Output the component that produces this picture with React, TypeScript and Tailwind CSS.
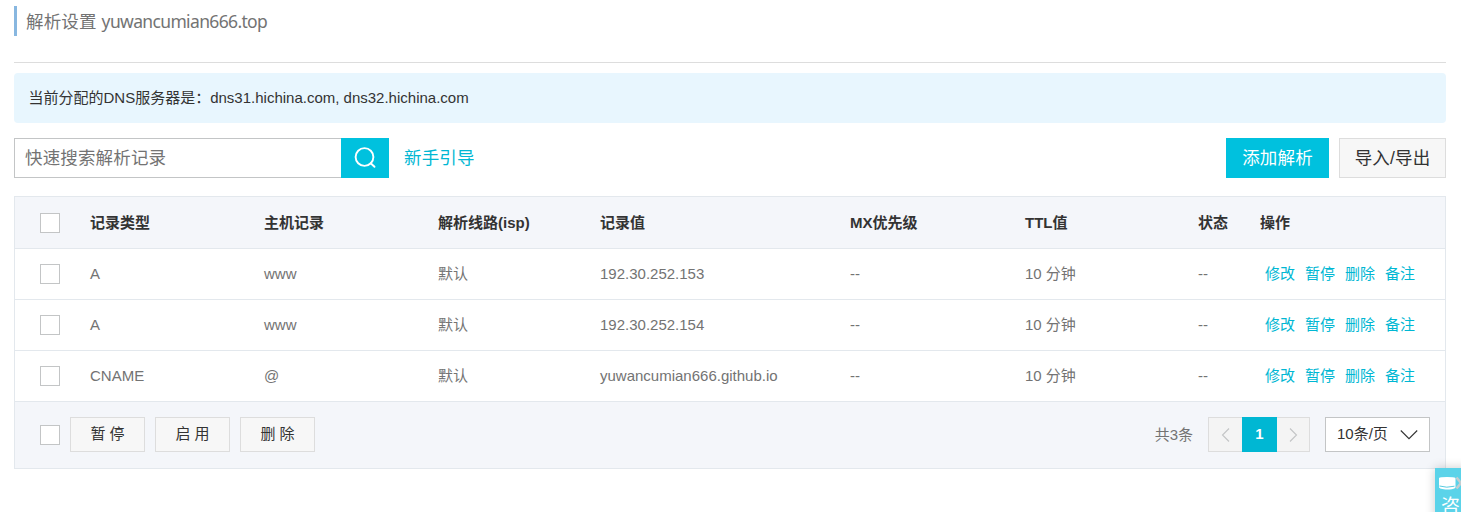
import React from "react";

const columns = "grid grid-cols-[75px_174px_174px_162px_250px_175px_173px_62px_1fr]";

const headings = ["记录类型", "主机记录", "解析线路(isp)", "记录值", "MX优先级", "TTL值", "状态", "操作"];

const records = [
  { type: "A", host: "www", line: "默认", value: "192.30.252.153" },
  { type: "A", host: "www", line: "默认", value: "192.30.252.154" },
  { type: "CNAME", host: "@", line: "默认", value: "yuwancumian666.github.io" },
];

const actions = ["修改", "暂停", "删除", "备注"];

function Checkbox() {
  return <span role="checkbox" aria-checked="false" className="block size-5 shrink-0 border border-[#c3c5c6] bg-white" />;
}

function Chevron({ d, className }: { d: string; className: string }) {
  return (
    <svg viewBox="0 0 18 18" className={className} fill="none" stroke="currentColor" strokeWidth="1.1">
      <path d={d} />
    </svg>
  );
}

export default function App() {
  return (
    <div className="relative h-[512px] w-[1461px] overflow-hidden bg-white pl-[14px] pr-[15px] pt-1.5 font-['Liberation_Sans','Noto_Sans_CJK_SC',sans-serif] text-[15px] text-[#737373]">
      <header className="h-[57px] border-b border-[#dddddd]">
        <h1 className="flex h-[30px] items-center gap-[5px] border-l-3 border-[#88b7e0] pl-[9px] font-['Noto_Sans','Noto_Sans_CJK_SC',sans-serif] text-[17.5px]">
          <span className="tracking-[0.15px]">解析设置</span>
          <span className="tracking-[-0.65px]">yuwancumian666.top</span>
        </h1>
      </header>

      <div className="mt-2.5 flex h-[50px] items-center rounded bg-[#e8f6fe] pl-[14.5px] text-[#333333]">
        当前分配的DNS服务器是：dns31.hichina.com, dns32.hichina.com
      </div>

      <div className="mt-[15px] flex h-10 items-stretch text-[17.5px] tracking-[0.15px]">
        <div className="flex w-[327px] items-center border border-r-0 border-[#c3c5c6] pl-2.5">快速搜索解析记录</div>
        <button className="flex w-12 items-center justify-center bg-[#00c1de] text-white">
          <svg viewBox="0 0 24 24" className="size-6" fill="none" stroke="currentColor" strokeWidth="1.9" strokeLinecap="round">
            <circle cx="11.5" cy="11" r="8.9" />
            <path d="m17.7 17.2 3.8 3.600" />
          </svg>
        </button>
        <a className="ml-[15px] flex items-center text-[#00b7d3]">新手引导</a>
        <button className="ml-auto w-[103px] bg-[#00c1de] text-white">添加解析</button>
        <button className="ml-2.5 w-[107px] border border-[#dddddd] bg-[#f7f7f7] text-[#333333]">导入/导出</button>
      </div>

      <section className="mt-[18px] border border-[#e3e8ed]">
        <div className={`${columns} h-[52px] items-center border-b border-[#e3e8ed] bg-[#f4f6fa] font-bold text-[#333333]`}>
          <div className="pl-[25px]"><Checkbox /></div>
          {headings.map((h) => <span key={h} className="pt-0.5">{h}</span>)}
        </div>
        {records.map((r) => (
          <div key={r.value} className={`${columns} h-[51px] items-center border-b border-[#e3e8ed]`}>
            <div className="pl-[25px]"><Checkbox /></div>
            <span>{r.type}</span>
            <span>{r.host}</span>
            <span>{r.line}</span>
            <span>{r.value}</span>
            <span>--</span>
            <span>10 分钟</span>
            <span>--</span>
            <span className="flex gap-2.5 whitespace-nowrap pl-[5px] text-[#00b7d3]">
              {actions.map((a) => <a key={a}>{a}</a>)}
            </span>
          </div>
        ))}
        <footer className="flex h-[66px] items-start bg-[#f4f6fa] pl-[25px] pr-[15px] pt-[15px]">
          <div className="pt-2"><Checkbox /></div>
          <div className="ml-2.5 flex gap-2.5 text-[#333333]">
            {["暂 停", "启 用", "删 除"].map((t) => (
              <button key={t} className="h-[35px] w-[75px] border border-[#dddddd] bg-[#f7f7f7]">{t}</button>
            ))}
          </div>
          <span className="ml-auto leading-[35px]">共3条</span>
          <div className="ml-[15px] flex h-[35px] w-[102px] items-stretch">
            <button className="flex w-[34px] items-center justify-center border border-r-0 border-[#dddddd] bg-[#f4f4f4] text-[#c3c5c6]">
              <Chevron d="M12 2.500 5.500 9l6.500 6.500" className="size-[18px]" />
            </button>
            <button className="w-[35px] bg-[#00b7d3] font-bold text-white">1</button>
            <button className="flex w-[33px] items-center justify-center border border-l-0 border-[#dddddd] bg-[#f4f4f4] text-[#c3c5c6]">
              <Chevron d="M6 2.500 12.500 9 6 15.500" className="size-[18px]" />
            </button>
          </div>
          <button className="ml-[15px] flex h-[35px] w-[105px] items-center justify-between border border-[#c3c5c6] bg-white pl-[11px] pr-[11px] text-[#333333]">
            10条/页
            <Chevron d="M.8 4.500 9 12.700 17.200 4.500" className="size-[18px]" />
          </button>
        </footer>
      </section>

      <aside className="absolute left-[1435px] top-[468px] h-[60px] w-[40px] bg-[#5bd3e9] text-white shadow-[0_0_10px_rgba(0,0,0,0.2)]">
        <svg viewBox="0 0 26 22" className="block h-[22px] w-[26px]">
          <path d="M4 10q1-1 8-1t8.500 1v9.500q-1 1.500-6 2-9 0-10.500-2z" fill="#fff" />
          <path d="M4.500 18q7 2.300 15 .2" fill="none" stroke="#45c5dc" strokeWidth=".9" />
          <path d="m21.500 9.500 9 11m0-11-9 11" stroke="#c4cdd0" strokeWidth="2.600" />
        </svg>
        <div className="pl-1.5 text-[19px] leading-[34px]">咨</div>
      </aside>
    </div>
  );
}
